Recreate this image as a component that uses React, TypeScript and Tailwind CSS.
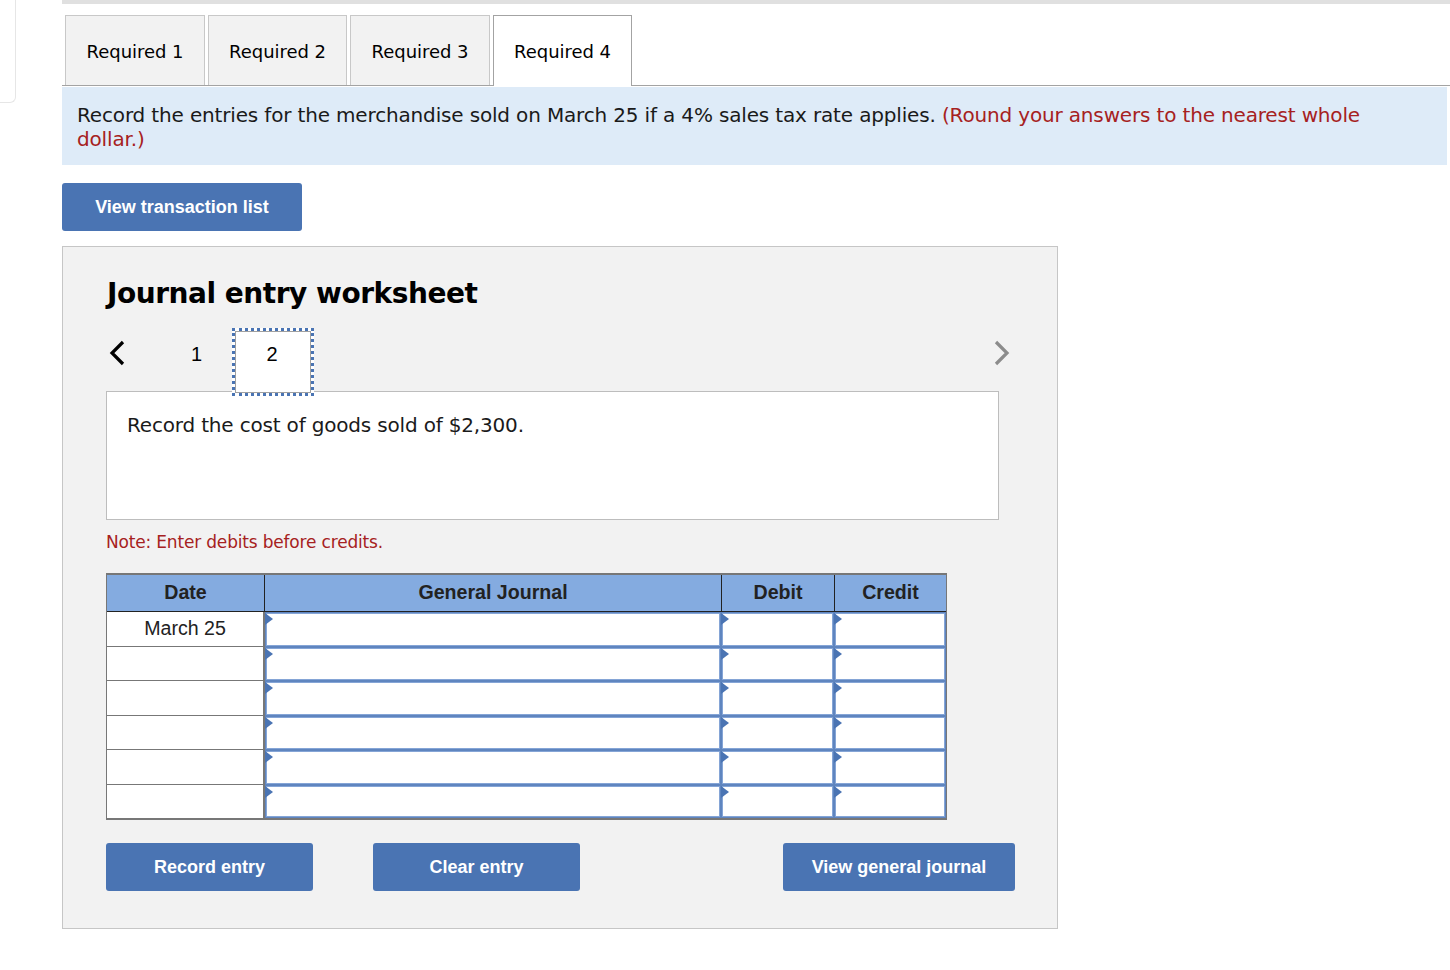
import React from "react"

const tabs = ["Required 1", "Required 2", "Required 3", "Required 4"]
const tabWidths = ["w-[140px]", "w-[139px]", "w-[140px]", "w-[139px]"]
const rows = [
  { date: "March 25", h: "h-[35px]" },
  { date: "", h: "h-[34px]" },
  { date: "", h: "h-[35px]" },
  { date: "", h: "h-[34px]" },
  { date: "", h: "h-[35px]" },
  { date: "", h: "h-[33px]" },
]

function EntryCell({ className }: { className: string }) {
  return (
    <div className={`relative h-full shrink-0 border-2 border-[#85a5d6] bg-white outline outline-1 outline-[#5f85bf] -outline-offset-1 ${className}`}>
      <span className="absolute -left-[2px] -top-[1px] h-0 w-0 border-y-[6px] border-l-[8px] border-y-transparent border-l-[#4a74b3]" />
    </div>
  )
}

function Chevron({ left }: { left?: boolean }) {
  return (
    <svg width="20" height="28" viewBox="0 0 20 28" fill="none" className={left ? "text-black" : "text-[#8c8c8c]"}>
      <path d={left ? "M15 3 L4 14 L15 25" : "M4 3 L15 14 L4 25"} stroke="currentColor" strokeWidth="3.2" />
    </svg>
  )
}

export default function App() {
  return (
    <div className="relative flex h-[970px] w-[1450px] overflow-hidden bg-white font-['DejaVu_Sans',Verdana,sans-serif] text-black">
      {/* left stub */}
      <aside className="w-[62px] shrink-0">
        <div className="h-[103px] w-[16px] rounded-br-md border-r border-b border-[#e6e6e6]" />
      </aside>

      <div className="w-[1388px]">
        <div className="h-1 bg-[#e0e0e0]" />

        {/* Tabs */}
        <div className="mt-[11px] flex h-[71px] gap-[3px] border-b border-[#a3a3a3] pl-[3px]">
          {tabs.map((t, i) => (
            <div
              key={t}
              className={`flex items-center justify-center border border-b-0 pt-px text-[18px] tracking-[-0.05px] ${tabWidths[i]} ${
                i === 3 ? "z-10 h-[71px] border-[#a3a3a3] bg-white" : "h-[70px] border-[#c8c8c8] bg-[#f2f2f2]"
              }`}
            >
              {t}
            </div>
          ))}
        </div>

        {/* Instructions */}
        <div className="mt-px h-[78px] w-[1385px] bg-[#deebf8] pl-[15px] pr-[40px] pt-4 text-[20px] leading-6 tracking-[-0.16px] text-[#1a1a1a]">
          Record the entries for the merchandise sold on March 25 if a 4% sales tax rate applies.{" "}
          <span className="text-[#a62121]">(Round your answers to the nearest whole dollar.)</span>
        </div>

        <button className="mt-[18px] block h-12 w-60 rounded-[3px] bg-[#4a74b3] font-['Liberation_Sans',Arial,sans-serif] text-[18px] font-bold text-white">
          View transaction list
        </button>

        {/* Worksheet */}
        <section className="mt-[15px] h-[683px] w-[996px] border border-[#c6c6c6] bg-[#f2f2f2] pl-[43px] pt-[29px]">
          <h2 className="h-[36px] pl-px text-[28px] font-bold leading-[36px] tracking-[-0.47px]">Journal entry worksheet</h2>

          <div className="relative z-10 mt-[16px] flex h-[68px] w-[906px] items-start">
            <div className="mt-[11px] ml-[2px] w-[20px]"><Chevron left /></div>
            <div className="w-[104px] pt-[16px] pr-[5px] text-right font-['Liberation_Sans',Arial,sans-serif] text-[20px] leading-none">
              <span className="mr-[25px]">1</span>
            </div>
            <div className="h-[68px] w-[82px] border-[3px] border-dotted border-[#4a74b3] bg-white pt-[11px] pr-[2px] text-center font-['Liberation_Sans',Arial,sans-serif] text-[20px] leading-6 outline outline-1 -outline-offset-4 outline-[#a0a0a0]">
              2
            </div>
            <div className="ml-auto mt-[11px]"><Chevron /></div>
          </div>

          <div className="-mt-[5px] h-[129px] w-[893px] border border-[#bdbdbd] bg-white pl-5 pt-[21px] text-[20px] leading-6 tracking-[-0.18px] text-[#1a1a1a]">
            Record the cost of goods sold of $2,300.
          </div>

          <p className="mt-[12px] text-[17px] leading-5 tracking-[-0.18px] text-[#a62121]">Note: Enter debits before credits.</p>

          {/* Journal table */}
          <div className="mt-[21px] w-[841px] border border-b-2 border-[#777777] font-['Liberation_Sans',Arial,sans-serif] text-[19.6px] text-[#222222]">
            <div className="flex h-[38px] border-t border-b border-t-[#777777] border-b-[#222222] bg-[#84abe0] font-bold leading-[34px]">
              <div className="w-[158px] shrink-0 border-r border-[#222222] text-center">Date</div>
              <div className="w-[457px] shrink-0 border-r border-[#222222] text-center">General Journal</div>
              <div className="w-[113px] shrink-0 border-r border-[#222222] text-center">Debit</div>
              <div className="flex-1 text-center">Credit</div>
            </div>
            {rows.map((r, i) => (
              <div key={i} className={`flex ${r.h}`}>
                <div className={`w-[158px] shrink-0 border-r-2 border-[#777777] bg-white text-center leading-[32px] ${i < 5 ? "border-b" : ""}`}>
                  {r.date}
                </div>
                <EntryCell className="w-[456px]" />
                <EntryCell className="w-[113px]" />
                <EntryCell className="flex-1" />
              </div>
            ))}
          </div>

          <div className="mt-[23px] flex w-[909px] justify-between font-['Liberation_Sans',Arial,sans-serif] text-[18px] font-bold text-white">
            <div className="flex gap-[60px]">
              <button className="h-12 w-[207px] rounded-[3px] bg-[#4a74b3]">Record entry</button>
              <button className="h-12 w-[207px] rounded-[3px] bg-[#4a74b3]">Clear entry</button>
            </div>
            <button className="h-12 w-[232px] rounded-[3px] bg-[#4a74b3]">View general journal</button>
          </div>
        </section>
      </div>
    </div>
  )
}
